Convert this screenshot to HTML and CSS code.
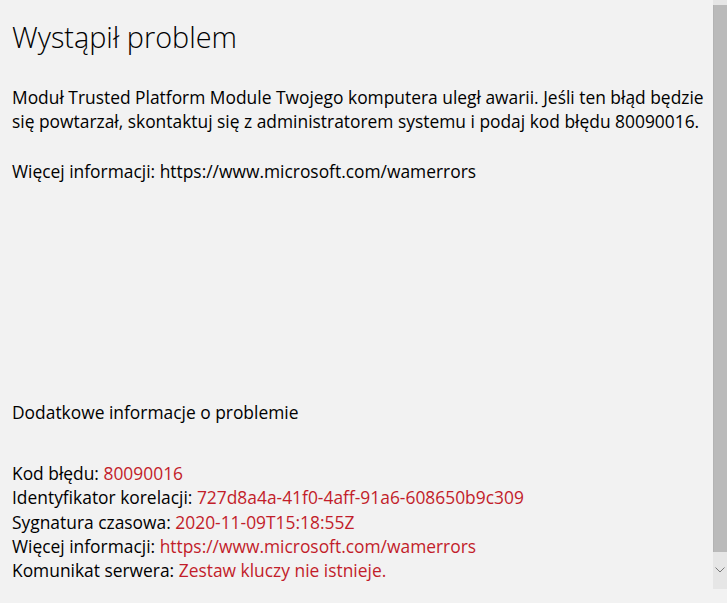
FILE: index.html
```html
<!DOCTYPE html>
<html lang="pl">
<head>
    <meta charset="UTF-8">
    <meta name="viewport" content="width=device-width, initial-scale=1.0">
    <title>Wystąpił problem</title>
    <link rel="stylesheet" href="styles.css">
</head>
<body>
    <div class="page">
        <h1 class="title">Wystąpił problem</h1>

        <p class="message">Moduł Trusted Platform Module Twojego komputera uległ awarii. Jeśli ten błąd będzie się powtarzał, skontaktuj się z administratorem systemu i podaj kod błędu 80090016.</p>
        <p class="message">Więcej informacji: https://www.microsoft.com/wamerrors</p>

        <div class="details">
            <h2 class="details-title">Dodatkowe informacje o problemie</h2>
            <ul class="details-list">
                <li>Kod błędu: <span class="val">80090016</span></li>
                <li>Identyfikator korelacji: <span class="val">727d8a4a-41f0-4aff-91a6-608650b9c309</span></li>
                <li>Sygnatura czasowa: <span class="val">2020-11-09T15:18:55Z</span></li>
                <li>Więcej informacji: <span class="val">https://www.microsoft.com/wamerrors</span></li>
                <li>Komunikat serwera: <span class="val">Zestaw kluczy nie istnieje.</span></li>
            </ul>
        </div>
    </div>

    <!-- pasek przewijania nad treścią -->
    <div class="scrollbar">
        <div class="scroll-thumb"></div>
        <div class="scroll-down">
            <svg width="10" height="6" viewBox="0 0 10 6"><path d="M0.5 0.5 L5 5 L9.5 0.5" fill="none" stroke="#7a7a7a" stroke-width="1"/></svg>
        </div>
    </div>
</body>
</html>
```

FILE: styles.css
```css
:root {
    --bg: #f2f2f2;
    --text: #000000;
    --red: #c21d2a;
}

body {
    margin: 0;
    background: var(--bg);
    color: var(--text);
    font-family: "Open Sans", "Noto Sans", sans-serif;
    overflow: hidden;
    height: 603px;
}

.page {
    width: 715px;
    padding: 18px 0 0 12px;
    font-size: 17.4px;
    line-height: 24.4px;
}

.title {
    margin: 0 0 29px;
    font-size: 28.8px;
    font-weight: 300;
    line-height: 38px;
}

.message {
    margin: 0 0 25.4px;
    max-width: 702px;
}

.details {
    margin-top: 216px;
}

.details-title {
    margin: 0 0 37px;
    font-size: 17.4px;
    font-weight: 400;
    line-height: 24.4px;
}

.details-list {
    list-style: none;
    margin: 0;
    padding: 0;
}

.details-list li { line-height: 24.3px; }

.val { color: var(--red); }

/* --- SCROLLBAR --- */
.scrollbar {
    position: absolute;
    top: 0;
    right: 0;
    width: 14px;
    height: 589px;
    background: #e6e6e6;
    display: flex;
    flex-direction: column;
}

.scroll-thumb {
    margin-top: 5px;
    height: 547px;
    background: #bababa;
    border-left: 1px solid #b3b3b3;
}

.scroll-down {
    flex: 1;
    display: flex;
    align-items: center;
    justify-content: center;
    padding-bottom: 2px;
}
```
